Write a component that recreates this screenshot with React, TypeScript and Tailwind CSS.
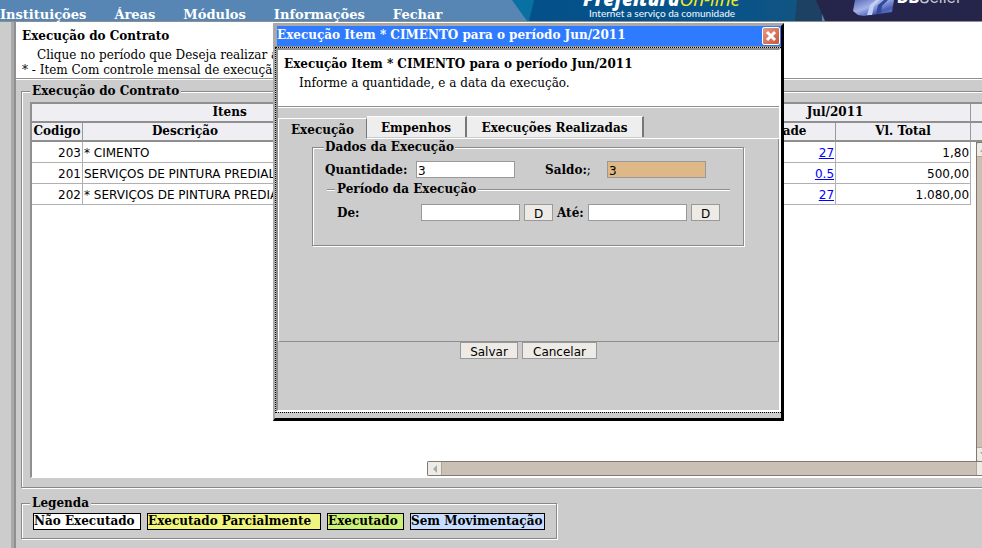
import type { ReactNode } from "react";

const serif = "font-['DejaVu_Serif',serif]";
const sans = "font-['DejaVu_Sans',sans-serif]";

const menu = ["Instituições", "Áreas", "Módulos", "Informações", "Fechar"];

const rows = [
  { code: "203", name: "* CIMENTO", qty: "27", total: "1,80" },
  { code: "201", name: "SERVIÇOS DE PINTURA PREDIAL", qty: "0.5", total: "500,00" },
  { code: "202", name: "* SERVIÇOS DE PINTURA PREDIAL", qty: "27", total: "1.080,00" },
];

const legend = [
  { label: "Não Executado", style: "w-[108px] bg-white" },
  { label: "Executado Parcialmente", style: "w-[174px] bg-[#f0f57f]" },
  { label: "Executado", style: "w-[77px] bg-[#cdf07a]" },
  { label: "Sem Movimentação", style: "w-[135px] bg-[#c9deff]" },
];

const groove = "border border-[#8b8885] shadow-[1px_1px_0_#fff,inset_1px_1px_0_#fff]";

function Banner() {
  return (
    <svg width="470" height="21" viewBox="0 0 470 21" className="ml-auto shrink-0" role="img" aria-label="Banner">
      <defs>
        <linearGradient id="field" x1="0" x2="1">
          <stop offset="0" stopColor="#04508a" />
          <stop offset="0.7" stopColor="#07538a" />
          <stop offset="1" stopColor="#14547f" />
        </linearGradient>
        <linearGradient id="cube" x1="0" x2="1" y1="0" y2="1">
          <stop offset="0" stopColor="#5a68b8" />
          <stop offset="0.4" stopColor="#a3b2e8" />
          <stop offset="0.7" stopColor="#4a5fb4" />
          <stop offset="1" stopColor="#6c8be0" />
        </linearGradient>
      </defs>
      <path d="M0 0H40V21H15Z" fill="#0970a2" />
      <path d="M22 0H300V21H17Z" fill="url(#field)" />
      <path d="M285 0H310V21H283Z" fill="#1d4162" />
      <path d="M304 0H470V21H313Z" fill="#25244a" />
      <text x="71" y="6" fontSize="19" fontWeight="800" fontStyle="italic" fill="#fff" fontFamily="Open Sans, sans-serif">
        Prefeitura<tspan fontWeight="400" fill="#f3ea1c">On-line</tspan>
      </text>
      <text x="77" y="17" fontSize="10" fontWeight="500" fill="#e6f2fa" fontFamily="Lato, sans-serif">
        Internet a serviço da comunidade
      </text>
      <path d="M343 0L341 11L346 15L352 16L380 12L382 0Z" fill="url(#cube)" />
      <path d="M355 15L358 5L364 0H368L362 6L360 15Z" fill="#c3cdf4" />
      <path d="M364 14L366 5L372 0H376L370 6L369 13Z" fill="#32489c" />
      <text x="385" y="3" fontSize="16" fontWeight="800" fill="#fff" fontFamily="Inter, sans-serif">
        DB<tspan fontWeight="400" fill="#c8c8d8">Seller</tspan>
      </text>
    </svg>
  );
}

function TextBox({ id, value = "", tone = "bg-white" }: { id: string; value?: string; tone?: string }) {
  return (
    <input
      id={id}
      defaultValue={value}
      className={`h-[17px] w-[99px] border border-[#999] px-px pt-0.5 text-xs leading-none font-normal ${sans} ${tone}`}
    />
  );
}

function SmallButton({ children, width }: { children: ReactNode; width: string }) {
  return (
    <button type="button" className={`h-[17px] border border-[#999] bg-[#eeebe7] pt-px text-xs leading-4 font-normal ${sans} ${width}`}>
      {children}
    </button>
  );
}

function ItemsTable() {
  const head = `border-r border-b-2 border-[#8f8f8f] border-r-[#999] p-0 font-bold text-xs leading-[17px] ${serif}`;
  const cell = "h-[21px] border-r border-b border-[#b0b0b0] px-px pt-px pb-0 whitespace-nowrap overflow-hidden";
  return (
    <div className="relative h-[376px] overflow-hidden border-t-2 border-l-2 border-b border-t-[#8f8f8f] border-l-[#8f8f8f] border-b-white bg-white">
      <table className={`w-[1211px] table-fixed border-separate border-spacing-0 text-xs leading-4 ${sans}`}>
        <colgroup>
          <col className="w-[51px]" />
          <col className="w-[205px]" />
          <col className="w-[140px]" />
          <col className="w-[136px]" />
          <col className="w-[136px]" />
          <col className="w-[136px]" />
          <col className="w-[135px]" />
          <col className="w-[272px]" />
        </colgroup>
        <thead className="bg-[#eeeef3]">
          <tr>
            <th colSpan={3} className={head}>Itens</th>
            <th colSpan={2} className={head} />
            <th colSpan={2} className={head}>Jul/2011</th>
            <th className={head} />
          </tr>
          <tr>
            <th className={head}>Codigo</th>
            <th className={head}>Descrição</th>
            <th className={head} />
            <th className={head} />
            <th className={head} />
            <th className={head}>Quantidade</th>
            <th className={head}>Vl. Total</th>
            <th className={head} />
          </tr>
        </thead>
        <tbody>
          {rows.map((row) => (
            <tr key={row.code}>
              <td className={`${cell} text-right`}>{row.code}</td>
              <td className={cell}>{row.name}</td>
              <td className={cell} />
              <td className={cell} />
              <td className={cell} />
              <td className={`${cell} text-right`}>
                <a href="#" className="text-[#0000ff] underline">{row.qty}</a>
              </td>
              <td className={`${cell} text-right`}>{row.total}</td>
            </tr>
          ))}
        </tbody>
      </table>
      <div className="absolute top-[38px] left-[944px] flex h-[320px] w-[15px] flex-col border border-[#83786d] bg-[#cbc0b5]">
        <span className="flex h-[14px] items-center justify-center rounded-tl-xs border-b border-[#b0a597] bg-[#ecebe6]">
          <svg width="8" height="5" viewBox="0 0 8 5"><path d="M0 5H8L4 0Z" fill="#aaa" /></svg>
        </span>
        <span className="mt-auto flex h-[14px] items-center justify-center rounded-bl-xs border-t border-[#b0a597] bg-[#ecebe6]">
          <svg width="8" height="5" viewBox="0 0 8 5"><path d="M0 0H8L4 5Z" fill="#aaa" /></svg>
        </span>
      </div>
      <div className="absolute right-0 bottom-px left-[395px] flex h-[15px] rounded-l-xs border border-r-0 border-[#83786d] bg-[#cbc0b5]">
        <span className="flex w-[14px] items-center justify-center border-r border-[#b0a597] bg-[#ecebe6]">
          <svg width="4" height="8" viewBox="0 0 4 8"><path d="M4 0V8L0 4Z" fill="#aaa" /></svg>
        </span>
        <span className="ml-auto w-[6px] border-l border-[#b0a597] bg-[#ecebe6]" />
      </div>
    </div>
  );
}

function Dialog() {
  const tab = "mb-px h-[21px] border-t border-r-2 border-t-white border-r-[#777] bg-[#eee] leading-[22px]";
  return (
    <section
      role="dialog"
      aria-label="Execução Item"
      className={`absolute top-[23px] left-[273px] w-[511px] border-[3px] border-l-2 border-t-[#a9a9a9] border-r-black border-b-black border-l-[#a9a9a9] bg-[#ccc] text-xs ${serif}`}
    >
      <header className="flex h-5 items-center border-l-2 border-[#a9a9a9] bg-[#2f7bff] font-bold text-white">
        <h2 className="pb-0.5 leading-4">Execução Item * CIMENTO para o período Jun/2011</h2>
        <button type="button" aria-label="Fechar" className="mr-px ml-auto flex h-[18px] w-[18px] items-center justify-center rounded-xs border border-white bg-linear-to-br from-[#e59a84] to-[#c8553b]">
          <svg width="12" height="12" viewBox="0 0 12 12"><path d="M2 2L10 10M10 2L2 10" stroke="#fff" strokeWidth="3" /></svg>
        </button>
      </header>
      <div className="border-t border-[#8f8f8f] pb-[5px]">
        <div className="border-y border-l border-dotted border-black">
          <div className="h-[364px] border-2 border-t-[#8f8f8f] border-r-white border-b-white border-l-[#8f8f8f]">
            <div className="border-b border-white">
              <div className="h-[57px] border-b border-[#8f8f8f] bg-white px-1.5 pt-1.5">
                <h3 className="leading-4 font-bold">Execução Item * CIMENTO para o período Jun/2011</h3>
                <p className="pt-[3px] pl-[15px] leading-4">Informe a quantidade, e a data da execução.</p>
              </div>
            </div>
            <nav className="flex items-end pt-2 text-center font-bold">
              <button type="button" className="h-5 w-[89px] border-x border-t border-t-white border-r-[#777] border-l-white leading-[22px]">Execução</button>
              <button type="button" className={`w-[100px] ${tab}`}>Empenhos</button>
              <button type="button" className={`w-[177px] ${tab}`}>Execuções Realizadas</button>
            </nav>
            <div className="flex">
              <div className="w-[89px] border-l border-white" />
              <div className="h-px flex-1 bg-white" />
            </div>
            <div className="h-[203px] border-r border-b border-l border-r-[#8f8f8f] border-b-[#8f8f8f] border-l-white pr-[34px] pl-[33px]">
              <fieldset className={`h-[107px] pr-3 pl-[11px] ${groove}`}>
                <legend className="bg-[#ccc] px-px leading-4 font-bold">Dados da Execução</legend>
                <div className="flex items-center pt-1.5 font-bold">
                  <label htmlFor="quantidade" className="w-[92px] pl-px">Quantidade:</label>
                  <TextBox id="quantidade" value="3" />
                  <label htmlFor="saldo" className="ml-[30px] w-[62px]">Saldo:<span className="font-normal">;</span></label>
                  <TextBox id="saldo" value="3" tone="bg-[#deb887]" />
                </div>
                <fieldset className="mt-[3px] mr-px ml-[3px] border-t border-[#8f8f8f] px-2 shadow-[inset_0_1px_0_#fff]">
                  <legend className="bg-[#ccc] px-0.5 leading-4 font-bold">Período da Execução</legend>
                  <div className="flex items-center pt-[7px] font-bold">
                    <label htmlFor="de" className="w-[86px] pl-0.5">De:</label>
                    <TextBox id="de" />
                    <span className="w-1" />
                    <SmallButton width="w-[29px]">D</SmallButton>
                    <label htmlFor="ate" className="w-[35px] pl-1">Até:</label>
                    <TextBox id="ate" />
                    <span className="w-1" />
                    <SmallButton width="w-[29px]">D</SmallButton>
                  </div>
                </fieldset>
              </fieldset>
            </div>
            <div className="flex justify-center gap-1">
              <SmallButton width="w-[58px]">Salvar</SmallButton>
              <SmallButton width="w-[75px]">Cancelar</SmallButton>
            </div>
          </div>
        </div>
      </div>
    </section>
  );
}

export default function App() {
  return (
    <div className={`relative flex min-h-screen flex-col overflow-hidden bg-[#ccc] text-xs text-black ${serif}`}>
      <header className="flex border-b border-[#8f8f8f] bg-[#5786b4]">
        <nav className="flex gap-7 pt-2 text-[13px] font-bold text-white">
          {menu.map((item) => (
            <a key={item} href="#" className="leading-[13px]">{item}</a>
          ))}
        </nav>
        <Banner />
      </header>
      <div className="flex flex-1">
        <div className="w-4 shrink-0 border-r-2 border-[#8f8f8f]">
          <div className="ml-auto h-full w-[3px] bg-[#a9a9a9]" />
        </div>
        <main className="min-w-0 flex-1">
          <div className="border-b border-white">
            <div className="h-[57px] overflow-hidden border-b border-[#8f8f8f] bg-white px-1.5 pt-1.5">
              <h1 className="leading-4 font-bold">Execução do Contrato</h1>
              <p className="pt-1 pl-[15px] leading-[15px]">Clique no período que Deseja realizar a execução</p>
              <p className="leading-[15px]">* - Item Com controle mensal de execução</p>
            </div>
          </div>
          <fieldset className={`mt-[3px] ml-[5px] min-w-0 border-r-0 pb-[9px] pl-2 ${groove}`}>
            <legend className="bg-[#ccc] px-0.5 leading-4 font-bold">Execução do Contrato</legend>
            <div className="pt-[3px]"><ItemsTable /></div>
          </fieldset>
          <fieldset className={`mt-[7px] ml-[5px] w-[536px] pb-2 pl-2 ${groove}`}>
            <legend className="bg-[#ccc] px-0.5 leading-4 font-bold">Legenda</legend>
            <ul className="flex gap-1.5 pt-0.5 pl-[3px] font-bold">
              {legend.map((item) => (
                <li key={item.label} className={`h-[17px] border border-black leading-[15px] whitespace-nowrap ${item.style}`}>{item.label}</li>
              ))}
            </ul>
          </fieldset>
        </main>
      </div>
      <Dialog />
    </div>
  );
}
